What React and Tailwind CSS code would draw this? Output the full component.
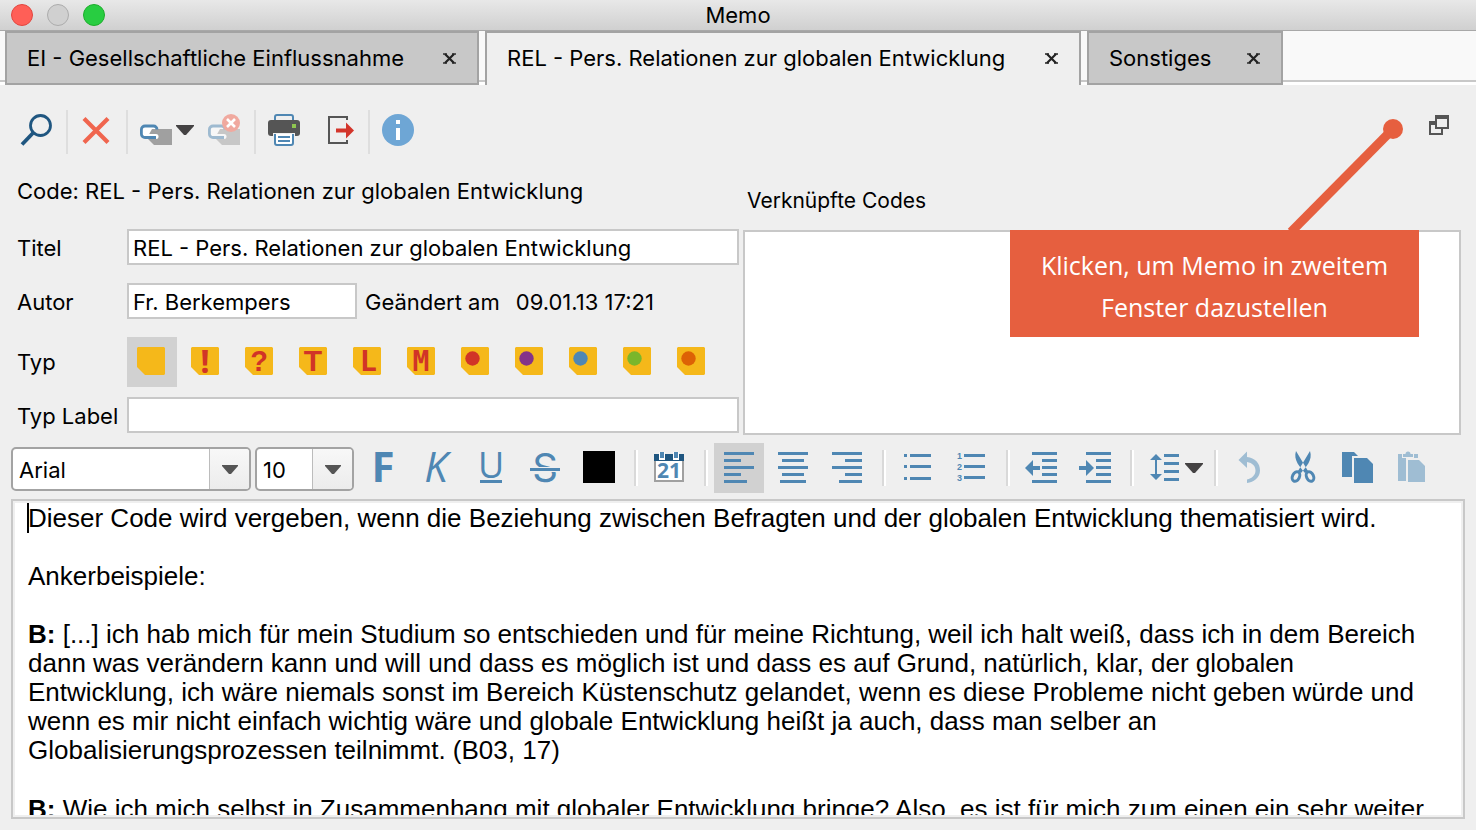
import React, { useState } from "react";

const TABS = [
  { id: "ei", label: "EI - Gesellschaftliche Einflussnahme", width: "w-[474px]" },
  { id: "rel", label: "REL - Pers. Relationen zur globalen Entwicklung", width: "w-[596px]" },
  { id: "so", label: "Sonstiges", width: "w-[196px]" },
];

const MEMO_TYPES = [
  { id: "leer", name: "Standard" },
  { id: "ausruf", name: "Ausrufezeichen", char: "!", font: "Open Sans", size: 33, x: 14, y: 26 },
  { id: "frage", name: "Fragezeichen", char: "?", font: "Liberation Sans", size: 29, x: 14, y: 24 },
  { id: "t", name: "T", char: "T", font: "Liberation Sans", size: 30, x: 14, y: 24 },
  { id: "l", name: "L", char: "L", font: "Inter", size: 28, x: 16, y: 24 },
  { id: "m", name: "M", char: "M", font: "DejaVu Sans Mono", size: 28, x: 14, y: 24 },
  { id: "rot", name: "Rot", dot: "#d13427" },
  { id: "lila", name: "Lila", dot: "#843389" },
  { id: "blau", name: "Blau", dot: "#4f87b3" },
  { id: "gruen", name: "Grün", dot: "#7ab62b" },
  { id: "orange", name: "Orange", dot: "#dd6205" },
];

const Icon = ({ children }) => (
  <svg className="w-8 h-8 shrink-0 overflow-visible" viewBox="0 0 32 32" aria-hidden="true">
    {children}
  </svg>
);

const Caret = () => (
  <svg className="w-[18px] h-[10px] shrink-0" viewBox="0 0 18 10" aria-hidden="true">
    <path d="M0 0h18v1L10 10H8L0 1z" fill="#444243" />
  </svg>
);

// Botones de 50px, los que llevan menú son más anchos
const ToolButton = ({ label, active, menu, children }) => (
  <button
    type="button"
    aria-label={label}
    className={`h-[50px] shrink-0 flex items-center justify-center gap-1 ${
      menu ? "w-16 pl-2" : "w-[50px]"
    } ${active ? "bg-[#d1d1d1]" : ""}`}
  >
    <Icon>{children}</Icon>
    {menu && <Caret />}
  </button>
);

const Divider = () => <div className="w-0.5 h-11 mt-1 ml-[5px] mr-[3px] bg-[#dedede] shrink-0" />;

const FormatDivider = () => (
  <div className="w-1 h-9 ml-2.5 mr-1.5 bg-[#d9d9d9] border-r-2 border-white shrink-0" />
);

// rows: [x, y, width]
const Bars = ({ rows }) =>
  rows.map(([x, y, w]) => <rect key={`${x}-${y}`} x={x} y={y} width={w} height="3" fill="#4f87b3" />);

const LinkShape = () => (
  <>
    <rect x="1.5" y="12.5" width="15" height="11" rx="4" fill="#fff" />
    <path d="M12 15h20v16H14l-7-7z" fill="#a0a0a0" />
    <path d="M9 22.5h7" stroke="#fff" strokeWidth="5" strokeLinecap="round" />
    <path
      d="M17 15.5c0-2-1.5-3.5-3.5-3.5H5a3.6 3.6 0 0 0-3.6 3.6v4.3A3.6 3.6 0 0 0 5 23.500h11"
      fill="none"
      stroke="#4f87b3"
      strokeWidth="2.8"
    />
  </>
);

const TitleBar = () => (
  <header className="relative h-[31px] shrink-0 flex items-center justify-center bg-linear-to-b from-[#e8e8e8] to-[#d0d0d0] border-b border-[#a8a8a8]">
    <div className="absolute left-[11px] top-1 flex gap-3.5">
      <button type="button" aria-label="Schließen" className="w-[22px] h-[22px] rounded-full bg-[#ff5f57] border border-[#e2463f]" />
      <button type="button" aria-label="Minimieren" className="w-[22px] h-[22px] rounded-full bg-[#d0d0d0] border border-[#acacac]" />
      <button type="button" aria-label="Vergrößern" className="w-[22px] h-[22px] rounded-full bg-[#28cd41] border border-[#1dad2b]" />
    </div>
    <h1>Memo</h1>
  </header>
);

const TabBar = ({ active, onSelect }) => (
  <nav className="h-[54px] shrink-0 flex gap-1.5 px-[5px] bg-[linear-gradient(to_bottom,#f9f9f9_49px,#c8c8c8_49px,#c8c8c8_51px,#fff_51px)]">
    {TABS.map((tab) => (
      <div
        key={tab.id}
        className={`flex items-center justify-between px-5 border-2 border-[#a3a3a3] ${tab.width} ${
          tab.id === active ? "bg-[#efefef] border-b-0 pb-0.5" : "bg-[#c8c8c8]"
        }`}
      >
        <button type="button" className="whitespace-nowrap" onClick={() => onSelect(tab.id)}>
          {tab.label}
        </button>
        <button type="button" aria-label={`${tab.label} schließen`} className="w-3.5 h-3.5">
          <svg className="w-3.5 h-3.5" viewBox="0 0 14 14">
            <path d="M0 3h4M0 12h4M9 3h4M9 12h4" stroke="#555" strokeWidth="2" />
            <path d="M2 3l9 9M11 3l-9 9" stroke="#222" strokeWidth="2.200" />
          </svg>
        </button>
      </div>
    ))}
  </nav>
);

const MainToolbar = () => (
  <div className="flex items-center pt-5 pl-[11px] pr-[27px]">
    <ToolButton label="Suchen">
      <circle cx="20.500" cy="11.500" r="10" fill="none" stroke="#1f5680" strokeWidth="2.800" />
      <path d="M13 19L2 30.500" stroke="#1f5680" strokeWidth="3.800" />
    </ToolButton>
    <Divider />
    <ToolButton label="Löschen">
      <path d="M4 4.500l24 24M28 4.500l-24 24" stroke="#f0654e" strokeWidth="4.200" />
    </ToolButton>
    <Divider />
    <div className="flex gap-1">
      <ToolButton label="Verknüpfen" menu>
        <LinkShape />
      </ToolButton>
      <ToolButton label="Verknüpfung entfernen">
        <g opacity="0.5">
          <LinkShape />
        </g>
        <circle cx="23" cy="9" r="9" fill="#f0a99f" />
        <path d="M19 5l8 8M27 5l-8 8" stroke="#fff" strokeWidth="2.600" />
      </ToolButton>
    </div>
    <Divider />
    <div className="flex gap-1">
      <ToolButton label="Drucken">
        <rect x="7" y="1" width="18" height="10" rx="2" fill="#efefef" stroke="#4f87b3" strokeWidth="2" />
        <rect x="0" y="6" width="32" height="16" rx="3" fill="#555" />
        <rect x="24" y="10" width="4" height="4" fill="#8fc650" />
        <path d="M5 20.500h22" stroke="#efefef" strokeWidth="3" />
        <path d="M7 20v9a2 2 0 0 0 2 2h14a2 2 0 0 0 2-2v-9" fill="#fff" stroke="#4f87b3" strokeWidth="2" />
        <path d="M10 23h12M10 27h12" stroke="#4f87b3" strokeWidth="2" />
      </ToolButton>
      <ToolButton label="Exportieren">
        <path d="M25 6V3H7v26h18v-3" fill="none" stroke="#555" strokeWidth="2" />
        <path d="M14 14.500h10v-6l8 8-8 8v-6H14z" fill="#d3352b" />
      </ToolButton>
    </div>
    <Divider />
    <ToolButton label="Info">
      <circle cx="16" cy="16" r="16" fill="#6ea6d5" />
      <path d="M14 6h4v4h-4zM14 14h4v12h-4z" fill="#fff" />
    </ToolButton>
    <button type="button" aria-label="In zweitem Fenster darstellen" className="ml-auto mb-2.5">
      <svg className="w-5 h-5" viewBox="0 0 20 20">
        <path d="M1 7v12h12V7z" fill="#efefef" stroke="#555" strokeWidth="2" />
        <path d="M0 6h14v4H0z" fill="#555" />
        <path d="M7 1v12h12V1z" fill="#efefef" stroke="#555" strokeWidth="2" />
        <path d="M6 0h14v4H6z" fill="#555" />
      </svg>
    </button>
  </div>
);

const TypeIcon = ({ type }) => (
  <svg className="w-[30px] h-[30px] overflow-visible" viewBox="0 0 30 30" aria-hidden="true">
    <path d="M1 0h26l1 1v26l-1 1H8l-8-8V1z" fill="#f5b81a" />
    {type.dot && <circle cx="11.500" cy="11.500" r="7.200" fill={type.dot} />}
    {type.char && (
      <text
        x={type.x}
        y={type.y}
        textAnchor="middle"
        fontFamily={`${type.font}, sans-serif`}
        fontWeight="700"
        fontSize={type.size}
        fill="#d13427"
      >
        {type.char}
      </text>
    )}
  </svg>
);

const labelClass = "w-[110px] pt-0.5 shrink-0 whitespace-nowrap";
const inputClass = "h-9 min-w-0 bg-white border-2 border-[#c8c8c8] px-1 pt-0.5 outline-none";

const MemoForm = () => {
  const [type, setType] = useState("leer");

  return (
    <section className="grid grid-cols-[722fr_718fr] gap-1 pl-[17px] pr-[15px]">
      <div className="pt-[18px] pb-0.5">
        <p className="h-9 leading-9 whitespace-nowrap">
          Code: REL - Pers. Relationen zur globalen Entwicklung
        </p>
        <div className="mt-5 flex items-center">
          <label htmlFor="titel" className={labelClass}>Titel</label>
          <input
            id="titel"
            className={`${inputClass} flex-1`}
            defaultValue="REL - Pers. Relationen zur globalen Entwicklung"
          />
        </div>
        <div className="mt-[18px] flex items-center">
          <label htmlFor="autor" className={labelClass}>Autor</label>
          <input id="autor" className={`${inputClass} w-[230px]`} defaultValue="Fr. Berkempers" />
          <span className="ml-2 pt-0.5 whitespace-nowrap">Geändert am</span>
          <span className="ml-4 pt-0.5 whitespace-nowrap">09.01.13 17:21</span>
        </div>
        <div className="mt-[18px] flex items-center">
          <span className="w-[110px] shrink-0">Typ</span>
          <div className="flex gap-1">
            {MEMO_TYPES.map((t) => (
              <button
                key={t.id}
                type="button"
                aria-label={t.name}
                aria-pressed={type === t.id}
                onClick={() => setType(t.id)}
                className={`w-[50px] h-[50px] flex items-center justify-center ${
                  type === t.id ? "bg-[#d1d1d1]" : ""
                }`}
              >
                <TypeIcon type={t} />
              </button>
            ))}
          </div>
        </div>
        <div className="mt-2.5 flex items-center">
          <label htmlFor="typlabel" className={labelClass}>Typ Label</label>
          <input id="typlabel" className={`${inputClass} flex-1`} />
        </div>
      </div>
      <div className="flex flex-col pt-[30px]">
        <h2 className="h-[45px] pl-1 leading-8 text-[21px]">Verknüpfte Codes</h2>
        <div className="flex-1 bg-white border-2 border-[#c8c8c8]" />
      </div>
    </section>
  );
};

const SelectBox = ({ label, value, className }) => (
  <div className={`relative h-11 mt-0.5 shrink-0 flex rounded-[5px] border-2 border-[#a3a3a3] bg-white overflow-hidden ${className}`}>
    <select aria-label={label} defaultValue={value} className="appearance-none w-full pl-1.5 pt-0.5 outline-none">
      <option>{value}</option>
    </select>
    <div className="absolute right-0 inset-y-0 w-10 flex items-center justify-center border-l border-[#bcbcbc] bg-linear-to-b from-[#f8f8f8] to-[#ececec] pointer-events-none">
      <svg className="w-4 h-[9px]" viewBox="0 0 16 9">
        <path d="M0 0h16v1L9 9H7L0 1z" fill="#555" />
      </svg>
    </div>
  </div>
);

const FormatToolbar = () => (
  <div className="flex items-center pt-2 pl-[11px] gap-1">
    <SelectBox label="Schriftart" value="Arial" className="w-60" />
    <SelectBox label="Schriftgröße" value="10" className="w-[99px]" />
    <div className="flex items-center">
      <div className="flex gap-1">
        <ToolButton label="Fett">
          <text x="16" y="30" textAnchor="middle" fontFamily="Open Sans, sans-serif" fontWeight="700" fontSize="42" fill="#4f87b3">F</text>
        </ToolButton>
        <ToolButton label="Kursiv">
          <text x="15" y="30" textAnchor="middle" fontFamily="Open Sans, sans-serif" fontStyle="italic" fontSize="42" fill="#4f87b3">K</text>
        </ToolButton>
        <ToolButton label="Unterstrichen">
          <text x="16" y="26" textAnchor="middle" fontFamily="Open Sans, sans-serif" fontSize="36" fill="#4f87b3">U</text>
          <rect x="5" y="28" width="22" height="3" fill="#4f87b3" />
        </ToolButton>
        <ToolButton label="Durchgestrichen">
          <text x="16" y="30" textAnchor="middle" fontFamily="Inter, sans-serif" fontSize="40" fill="#4f87b3">S</text>
          <rect x="1" y="15" width="30" height="5" fill="#efefef" />
          <rect x="1" y="16" width="30" height="3" fill="#4f87b3" />
        </ToolButton>
        <ToolButton label="Schriftfarbe">
          <rect x="0" y="-1" width="32" height="32" fill="#000" />
        </ToolButton>
      </div>
      <FormatDivider />
      <ToolButton label="Datum einfügen">
        <rect x="2" y="3" width="28" height="26" fill="#fff" stroke="#a0a0a0" strokeWidth="2" />
        <rect x="1" y="2" width="30" height="7" fill="#1f5680" />
        <path d="M6 0h6v8H6zM20 0h6v8h-6z" fill="#fff" />
        <path d="M7 0h4v6H7zM21 0h4v6h-4z" fill="#4f87b3" />
        <text x="16" y="26" textAnchor="middle" fontFamily="Open Sans, sans-serif" fontWeight="700" fontSize="21" fill="#4f87b3">21</text>
      </ToolButton>
      <FormatDivider />
      <div className="flex gap-1">
        <ToolButton label="Linksbündig" active>
          <Bars rows={[[1, 0, 30], [1, 7, 17], [1, 14, 30], [1, 21, 17], [1, 28, 23]]} />
        </ToolButton>
        <ToolButton label="Zentriert">
          <Bars rows={[[1, 0, 30], [5, 7, 22], [1, 14, 30], [5, 21, 22], [3, 28, 26]]} />
        </ToolButton>
        <ToolButton label="Rechtsbündig">
          <Bars rows={[[1, 0, 30], [14, 7, 17], [1, 14, 30], [14, 21, 17], [8, 28, 23]]} />
        </ToolButton>
      </div>
      <FormatDivider />
      <div className="flex gap-1">
        <ToolButton label="Aufzählung">
          <Bars rows={[[3, 2, 3], [9, 2, 21], [3, 13, 3], [9, 13, 21], [3, 25, 3], [9, 25, 21]]} />
        </ToolButton>
        <ToolButton label="Nummerierung">
          <g fontFamily="Liberation Sans, sans-serif" fontWeight="700" fontSize="9" fill="#4f87b3">
            <text x="2" y="7">1</text>
            <text x="2" y="18">2</text>
            <text x="2" y="29">3</text>
          </g>
          <Bars rows={[[9, 2, 21], [9, 13, 21], [9, 24, 21]]} />
        </ToolButton>
      </div>
      <FormatDivider />
      <div className="flex gap-1">
        <ToolButton label="Einzug verkleinern">
          <Bars rows={[[7, 0, 25], [17, 7, 15], [17, 14, 15], [17, 21, 15], [7, 28, 25]]} />
          <path d="M0 16l8-8v6h7v4H8v6z" fill="#4f87b3" />
        </ToolButton>
        <ToolButton label="Einzug vergrößern">
          <Bars rows={[[7, 0, 25], [17, 7, 15], [17, 14, 15], [17, 21, 15], [7, 28, 25]]} />
          <path d="M15 16l-8-8v6H0v4h7v6z" fill="#4f87b3" />
        </ToolButton>
      </div>
      <FormatDivider />
      <ToolButton label="Zeilenabstand" menu>
        <path d="M7 2l6 6H8v14h5l-6 6-6-6h5V8H1z" fill="#4f87b3" />
        <Bars rows={[[15, 2, 15], [15, 10, 15], [15, 18, 15], [15, 26, 15]]} />
      </ToolButton>
      <FormatDivider />
      <div className="flex gap-1">
        <ToolButton label="Rückgängig">
          <path d="M5.500 8L14-.500v5.500c8 1 13 6 13 13.500C27 25 21 30.500 14 31v-3.500c5-1 8.500-4.500 8.500-9 0-4.500-3-7.500-8.500-8.500v6z" fill="#9fbdd3" />
        </ToolButton>
        <ToolButton label="Ausschneiden">
          <path d="M9-1l12 20-3 2C13 15 6 8 9-1zM23-1L11 19l3 2c5-6 12-13 9-22z" fill="#4f87b3" />
          <ellipse cx="9" cy="24.500" rx="3.500" ry="5" transform="rotate(25 9 24.500)" fill="none" stroke="#4f87b3" strokeWidth="3" />
          <ellipse cx="23" cy="24.500" rx="3.500" ry="5" transform="rotate(-25 23 24.500)" fill="none" stroke="#4f87b3" strokeWidth="3" />
        </ToolButton>
        <ToolButton label="Kopieren">
          <path d="M1 0h12l4 4v21H1z" fill="#4f87b3" />
          <path d="M11 4h16v28H11z" fill="#efefef" />
          <path d="M13 6h13l6 6v19H13z" fill="#4f87b3" />
        </ToolButton>
        <ToolButton label="Einfügen">
          <path d="M3 2h20v27H3z" fill="#9fbdd3" />
          <path d="M7 0h12v6H7z" fill="#efefef" />
          <path d="M8 5V2h2.500a2.500 2.500 0 0 1 5 0H18v3z" fill="#9fbdd3" />
          <path d="M11 6h13v24H11z" fill="#efefef" />
          <path d="M13 8h11l6 6v16H13z" fill="#9fbdd3" />
        </ToolButton>
      </div>
    </div>
  </div>
);

const Editor = () => (
  <div className="flex-1 min-h-0 mt-1.5 mx-[11px] mb-[11px] border-2 border-[#c8c8c8] bg-[#efefef] p-0.5">
    <div
      role="textbox"
      aria-multiline="true"
      aria-label="Memotext"
      contentEditable
      suppressContentEditableWarning
      className="relative h-full overflow-hidden bg-white pl-[13px] pr-6 pt-px font-['Liberation_Sans',Arial,sans-serif] text-[26px] leading-[29px] outline-none"
    >
      <span className="absolute left-3 top-0 w-0.5 h-[30px] bg-black" />
      <p>Dieser Code wird vergeben, wenn die Beziehung zwischen Befragten und der globalen Entwicklung thematisiert wird.</p>
      <p className="mt-[29px]">Ankerbeispiele:</p>
      <p className="mt-[29px]">
        <b>B:</b> [...] ich hab mich für mein Studium so entschieden und für meine Richtung, weil ich halt weiß, dass ich in dem Bereich dann was verändern kann und will und dass es möglich ist und dass es auf Grund, natürlich, klar, der globalen Entwicklung, ich wäre niemals sonst im Bereich Küstenschutz gelandet, wenn es diese Probleme nicht geben würde und wenn es mir nicht einfach wichtig wäre und globale Entwicklung heißt ja auch, dass man selber an Globalisierungsprozessen teilnimmt. (B03, 17)
      </p>
      <p className="mt-[30px] whitespace-nowrap">
        <b>B:</b> Wie ich mich selbst in Zusammenhang mit globaler Entwicklung bringe? Also, es ist für mich zum einen ein sehr weiter
      </p>
    </div>
  </div>
);

const Callout = () => (
  <div className="absolute right-[57px] top-[118px] w-[409px] pointer-events-none">
    <svg className="block w-full h-28" viewBox="0 0 409 112" aria-hidden="true">
      <path d="M281 114L383 11" stroke="#e65f3f" strokeWidth="9" />
      <circle cx="383" cy="11" r="10" fill="#e65f3f" />
    </svg>
    <div className="h-[107px] pt-3.5 bg-[#e65f3f] text-white text-center font-['Open_Sans',sans-serif] text-[25px] leading-[42px]">
      Klicken, um Memo in zweitem
      <br />
      Fenster dazustellen
    </div>
  </div>
);

const App = () => {
  const [tab, setTab] = useState("rel");

  return (
    <main className="relative h-screen flex flex-col overflow-hidden bg-[#efefef] text-black font-[Inter,sans-serif] text-[22px] leading-7">
      <TitleBar />
      <TabBar active={tab} onSelect={setTab} />
      <MainToolbar />
      <MemoForm />
      <FormatToolbar />
      <Editor />
      <Callout />
    </main>
  );
};

export default App;
